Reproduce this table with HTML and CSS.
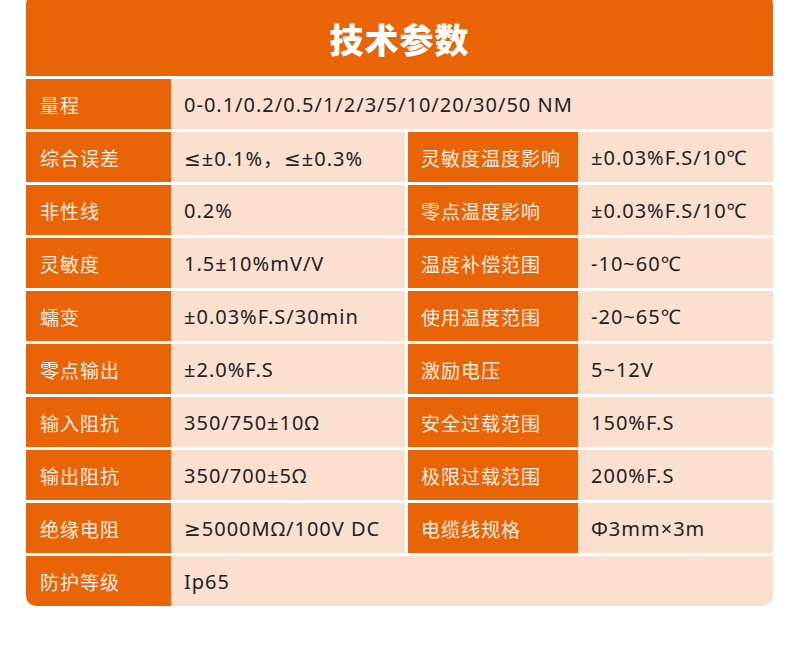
FILE: index.html
```html
<!DOCTYPE html>
<html lang="zh-CN">
<head>
<meta charset="utf-8">
<title>技术参数</title>
<link rel="stylesheet" href="styles.css">
</head>
<body>
<div class="card">
  <div class="title">技术参数</div>
  <div class="table">
    <div class="k">量程</div><div class="v wide">0-0.1/0.2/0.5/1/2/3/5/10/20/30/50 NM</div>
    <div class="k">综合误差</div><div class="v">≤±0.1%，≤±0.3%</div><div class="k k2">灵敏度温度影响</div><div class="v">±0.03%F.S/10℃</div>
    <div class="k">非性线</div><div class="v">0.2%</div><div class="k k2">零点温度影响</div><div class="v">±0.03%F.S/10℃</div>
    <div class="k">灵敏度</div><div class="v">1.5±10%mV/V</div><div class="k k2">温度补偿范围</div><div class="v">-10~60℃</div>
    <div class="k">蠕变</div><div class="v">±0.03%F.S/30min</div><div class="k k2">使用温度范围</div><div class="v">-20~65℃</div>
    <div class="k">零点输出</div><div class="v">±2.0%F.S</div><div class="k k2">激励电压</div><div class="v">5~12V</div>
    <div class="k">输入阻抗</div><div class="v">350/750±10Ω</div><div class="k k2">安全过载范围</div><div class="v">150%F.S</div>
    <div class="k">输出阻抗</div><div class="v">350/700±5Ω</div><div class="k k2">极限过载范围</div><div class="v">200%F.S</div>
    <div class="k">绝缘电阻</div><div class="v">≥5000MΩ/100V DC</div><div class="k k2">电缆线规格</div><div class="v">Φ3mm×3m</div>
    <div class="k">防护等级</div><div class="v wide">Ip65</div>
  </div>
</div>
</body>
</html>
```

FILE: styles.css
```css
html, body {
  margin: 0;
  padding: 0;
  background: #ffffff;
}
body {
  font-family: "Noto Sans CJK SC", "Noto Sans", sans-serif;
  width: 800px;
  height: 646px;
  overflow: hidden;
}
.card {
  margin: -6px 0 0 26px;
  width: 747px;
  border-radius: 10px;
  overflow: hidden;
  background: #ffffff;
  display: flex;
  flex-direction: column;
  gap: 3px;
}
.title {
  height: 82px;
  padding-top: 6px;
  box-sizing: border-box;
  background: #e96407;
  color: #ffffff;
  font-size: 34px;
  font-weight: 900;
  display: flex;
  align-items: center;
  justify-content: center;
  letter-spacing: 1px;
}
.table {
  display: grid;
  grid-template-columns: 145px 234px 3px 170px 195px;
  grid-auto-rows: 50px;
  row-gap: 3px;
}
.k, .v {
  display: flex;
  align-items: center;
  white-space: nowrap;
}
.k {
  background: #e96407;
  color: #fdeee4;
  padding-left: 14px;
  font-size: 19px;
  letter-spacing: 1px;
}
.k2 {
  grid-column: 4;
  padding-left: 13px;
}
.v {
  background: #fbe0d0;
  color: #222222;
  padding-left: 13px;
  font-family: "Noto Sans", "DejaVu Sans", "Noto Sans CJK SC", sans-serif;
  font-size: 20px;
  letter-spacing: 1px;
}
.wide {
  grid-column: 2 / -1;
}
```
